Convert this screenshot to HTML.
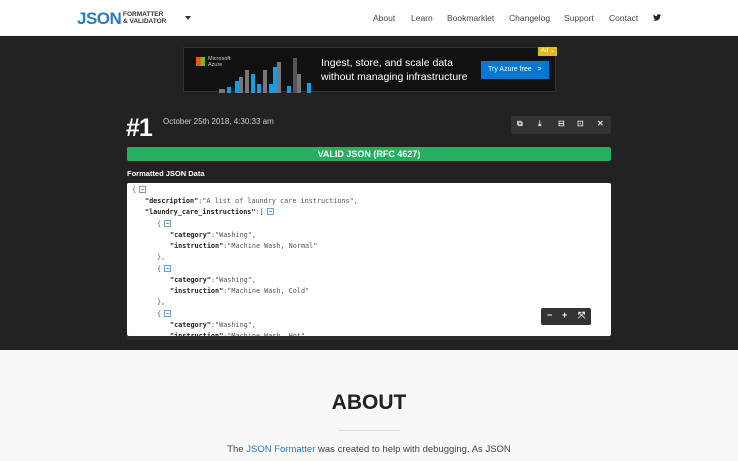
<!DOCTYPE html>
<html><head><meta charset="utf-8"><style>
*{margin:0;padding:0;box-sizing:border-box}
body{width:738px;height:461px;overflow:hidden;background:#f8f8f8;font-family:"Liberation Sans",sans-serif}
.nav{height:36px;background:#fff;position:relative;border-bottom:1px solid #eee}
.logo{position:absolute;left:77px;top:9px;color:#2a7bbf;font-weight:bold;font-size:17px;letter-spacing:-0.5px}
.logo2{position:absolute;left:123px;top:11px;font-size:6.5px;font-weight:bold;color:#333;line-height:7px}
.caret{position:absolute;left:185px;top:16px;border:3px solid transparent;border-top:4px solid #333}
.links{position:absolute;top:13px;font-size:8.5px;color:#444}
.links span{position:absolute;white-space:nowrap}
.dark{position:absolute;top:36px;left:0;width:738px;height:314px;background:#222}
.ad{position:absolute;left:183px;top:11px;width:373px;height:45px;background:#111;border:1px solid #333}
.code{position:absolute;left:127px;top:147px;width:484px;height:153px;background:#fff;border-radius:2px;overflow:hidden;font-family:"DejaVu Sans Mono",monospace;font-size:6.8px;color:#555}
.code div{position:absolute;white-space:pre;height:11px}
.k{color:#222;font-weight:bold}
.t{display:inline-block;width:7px;height:7px;border:1px solid #6aa0d8;vertical-align:-1px;margin-left:3px;position:relative}
.t:after{content:"";position:absolute;left:1px;right:1px;top:2px;height:1px;background:#6aa0d8}
</style></head><body>
<div class="nav">
<div class="logo">JSON</div>
<div class="logo2">FORMATTER<br>&amp; VALIDATOR</div>
<div class="caret"></div>
<div class="links"><span style="left:373px">About</span><span style="left:411px">Learn</span><span style="left:447px">Bookmarklet</span><span style="left:509px">Changelog</span><span style="left:564px">Support</span><span style="left:609px">Contact</span></div>
<svg style="position:absolute;left:653px;top:14px" width="8" height="7" viewBox="0 0 24 20"><path fill="#222" d="M24 2.4a9.8 9.8 0 0 1-2.8.8A4.9 4.9 0 0 0 23.3.5a9.8 9.8 0 0 1-3.1 1.2A4.9 4.9 0 0 0 11.8 6.2 14 14 0 0 1 1.7 1a4.9 4.9 0 0 0 1.5 6.6A4.9 4.9 0 0 1 1 7v.1a4.9 4.9 0 0 0 3.9 4.8 4.9 4.9 0 0 1-2.2.1 4.9 4.9 0 0 0 4.6 3.4A9.9 9.9 0 0 1 0 17.5 14 14 0 0 0 7.5 19.7c9.1 0 14-7.5 14-14v-.6A10 10 0 0 0 24 2.4z"/></svg>
</div>
<div class="dark">
<div class="ad">
<div style="position:absolute;left:12px;top:9px;width:9px;height:9px;background:linear-gradient(90deg,#f25022 50%,#7fba00 50%)"></div>
<div style="position:absolute;left:24px;top:8px;font-size:5.5px;color:#ccc;line-height:6px">Microsoft<br>Azure</div>
<svg style="position:absolute;left:33px;top:8px" width="95" height="37"><g fill="#777"><rect x="2" y="33" width="6" height="4"/><rect x="22" y="21" width="4" height="16"/><rect x="28" y="14" width="4" height="23"/><rect x="46" y="14" width="4" height="23"/><rect x="60" y="6" width="4" height="31"/><rect x="80" y="18" width="4" height="19"/><rect x="76" y="2" width="4" height="35" fill="#555"/></g><g fill="#1a9ae0"><rect x="10" y="31" width="4" height="6"/><rect x="18" y="25" width="4" height="12"/><rect x="34" y="18" width="4" height="19"/><rect x="40" y="28" width="4" height="9"/><rect x="52" y="28" width="4" height="9"/><rect x="56" y="11" width="4" height="26"/><rect x="70" y="30" width="4" height="7"/><rect x="90" y="27" width="4" height="10"/></g></svg>
<div style="position:absolute;left:137px;top:8px;font-size:10.5px;color:#fff;line-height:14px">Ingest, store, and scale data<br>without managing infrastructure</div>
<div style="position:absolute;left:297px;top:13px;width:68px;height:18px;background:#0078d4;color:#fff;font-size:7px;padding:5px 0 0 7px">Try Azure free &nbsp;&nbsp;&gt;</div>
<div style="position:absolute;left:354px;top:-1px;width:19px;height:9px;background:#e5b720;color:#fff;font-size:6px;padding-left:3px">Ad ⌄</div>
</div>
<div style="position:absolute;left:126px;top:78px;color:#fff;font-size:25px;font-weight:bold;letter-spacing:-1px">#1</div>
<div style="position:absolute;left:163px;top:81px;color:#ccc;font-size:8px">October 25th 2018, 4:30:33 am</div>
<div style="position:absolute;left:511px;top:80px;width:100px;height:18px;background:#333;border-radius:2px;color:#ddd;font-size:8px;font-weight:bold"><span style="position:absolute;left:6px;top:3px">⧉</span><span style="position:absolute;left:27px;top:3px">⤓</span><span style="position:absolute;left:47px;top:3px">⊟</span><span style="position:absolute;left:66px;top:3px">⊡</span><span style="position:absolute;left:86px;top:3px">✕</span></div>
<div style="position:absolute;left:127px;top:111px;width:484px;height:14px;background:#27ae60;border-radius:2px;color:#fff;font-weight:bold;font-size:9px;text-align:center;line-height:14px">VALID JSON (RFC 4627)</div>
<div style="position:absolute;left:127px;top:133px;color:#fff;font-weight:bold;font-size:7.5px">Formatted JSON Data</div>
<div class="code">
<div style="left:5px;top:3px">{<span class="t"></span></div>
<div style="left:18px;top:14px"><span class="k">"description"</span>:"A list of laundry care instructions",</div>
<div style="left:18px;top:25px"><span class="k">"laundry_care_instructions"</span>:[<span class="t"></span></div>
<div style="left:30px;top:37px">{<span class="t"></span></div>
<div style="left:43px;top:48px"><span class="k">"category"</span>:"Washing",</div>
<div style="left:43px;top:59px"><span class="k">"instruction"</span>:"Machine Wash, Normal"</div>
<div style="left:30px;top:70px">},</div>
<div style="left:30px;top:82px">{<span class="t"></span></div>
<div style="left:43px;top:93px"><span class="k">"category"</span>:"Washing",</div>
<div style="left:43px;top:104px"><span class="k">"instruction"</span>:"Machine Wash, Cold"</div>
<div style="left:30px;top:115px">},</div>
<div style="left:30px;top:127px">{<span class="t"></span></div>
<div style="left:43px;top:138px"><span class="k">"category"</span>:"Washing",</div>
<div style="left:43px;top:149px"><span class="k">"instruction"</span>:"Machine Wash, Hot"</div>
</div>
<div style="position:absolute;left:541px;top:272px;width:50px;height:17px;background:#333;border-radius:2px;color:#fff;font-size:9px;font-weight:bold"><span style="position:absolute;left:6px;top:2px">−</span><span style="position:absolute;left:21px;top:2px">+</span><span style="position:absolute;left:37px;top:2px">⤧</span></div>
<div style="position:absolute;left:127px;top:300px;width:484px;height:4px;background:#2c2c2c"></div>
</div>
<div style="position:absolute;top:391px;width:738px;text-align:center;font-size:21px;font-weight:bold;color:#222">ABOUT</div>
<div style="position:absolute;left:338px;top:430px;width:62px;height:1px;background:#ddd"></div>
<div style="position:absolute;top:444px;width:738px;text-align:center;font-size:9.5px;color:#444">The <span style="color:#2a7bbf">JSON Formatter</span> was created to help with debugging. As JSON</div>
</body></html>
